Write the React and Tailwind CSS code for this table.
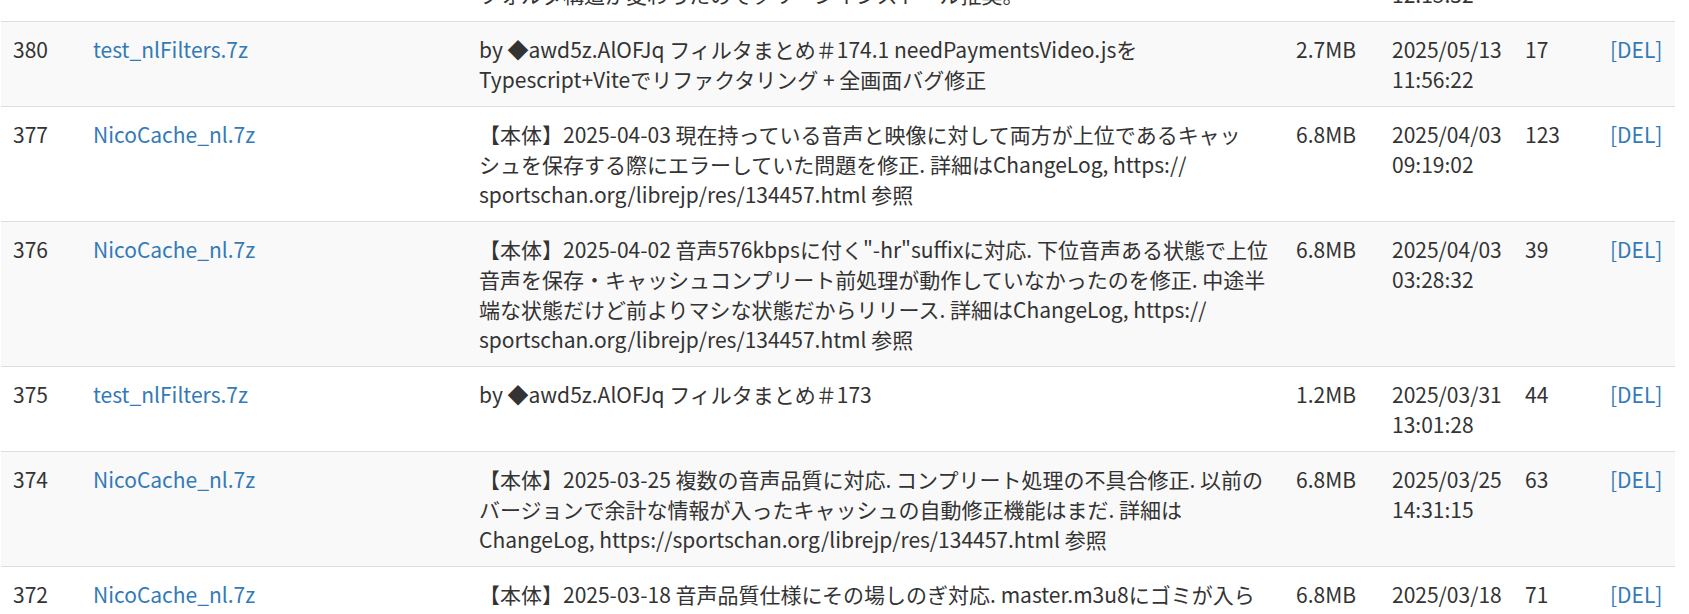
const url = <>https://<wbr />sportschan.org/librejp/res/134457.html</>

const rows = [
  {
    no: '379',
    file: 'NicoCache_nl.7z',
    desc: (<>【本体】2025-05-20 ダウンロード処理を整理.<br />フォルダ構造が変わったのでクリーンインストール推奨。</>),
    size: '6.8MB',
    date: '2025/05/20',
    time: '12:15:32',
    count: '88',
  },
  {
    no: '380',
    file: 'test_nlFilters.7z',
    desc: 'by ◆awd5z.AlOFJq フィルタまとめ＃174.1 needPaymentsVideo.jsを Typescript+Viteでリファクタリング + 全画面バグ修正',
    size: '2.7MB',
    date: '2025/05/13',
    time: '11:56:22',
    count: '17',
  },
  {
    no: '377',
    file: 'NicoCache_nl.7z',
    desc: (<>【本体】2025-04-03 現在持っている音声と映像に対して両方が上位であるキャッシュを保存する際にエラーしていた問題を修正. 詳細はChangeLog, {url} 参照</>),
    size: '6.8MB',
    date: '2025/04/03',
    time: '09:19:02',
    count: '123',
  },
  {
    no: '376',
    file: 'NicoCache_nl.7z',
    desc: (<>【本体】2025-04-02 音声576kbpsに付く"-hr"suffixに対応. 下位音声ある状態で上位音声を保存・キャッシュコンプリート前処理が動作していなかったのを修正. 中途半端な状態だけど前よりマシな状態だからリリース. 詳細はChangeLog, {url} 参照</>),
    size: '6.8MB',
    date: '2025/04/03',
    time: '03:28:32',
    count: '39',
  },
  {
    no: '375',
    file: 'test_nlFilters.7z',
    desc: 'by ◆awd5z.AlOFJq フィルタまとめ＃173',
    size: '1.2MB',
    date: '2025/03/31',
    time: '13:01:28',
    count: '44',
  },
  {
    no: '374',
    file: 'NicoCache_nl.7z',
    desc: (<>【本体】2025-03-25 複数の音声品質に対応. コンプリート処理の不具合修正. 以前のバージョンで余計な情報が入ったキャッシュの自動修正機能はまだ. 詳細はChangeLog, {url} 参照</>),
    size: '6.8MB',
    date: '2025/03/25',
    time: '14:31:15',
    count: '63',
  },
  {
    no: '372',
    file: 'NicoCache_nl.7z',
    desc: (<>【本体】2025-03-18 音声品質仕様にその場しのぎ対応. master.m3u8にゴミが入らないように修正. 詳細はChangeLog, {url} 参照</>),
    size: '6.8MB',
    date: '2025/03/18',
    time: '22:40:11',
    count: '71',
  },
]

const td = 'border-t border-[#ddd] p-3 align-top'

const App = () => {
  return <div lang="ja" className="h-[614px] w-[1689px] overflow-hidden bg-white">
    <table
      className="-mt-[64px] ml-px w-[1674px] table-fixed text-[21px] leading-[30px] text-[#333] [line-break:strict]"
      style={{ fontFamily: '"Noto Sans CJK JP", "Noto Sans", sans-serif' }}
    >
      <colgroup>
        <col className="w-[80px]" />
        <col className="w-[386px]" />
        <col className="w-[817px]" />
        <col className="w-[96px]" />
        <col className="w-[133px]" />
        <col className="w-[85px]" />
        <col className="w-[77px]" />
      </colgroup>
      <tbody>
        {rows.map((r, i) => (
          <tr key={r.no} className={i % 2 == 1 ? 'bg-[#f9f9f9]' : 'bg-white'}>
            <td className={td}>{r.no}</td>
            <td className={td}>
              <a href="#" className="text-[#337ab7]">{r.file}</a>
            </td>
            <td className={td}>{r.desc}</td>
            <td className={td}>{r.size}</td>
            <td className={td}>{r.date}<br />{r.time}</td>
            <td className={td}>{r.count}</td>
            <td className={td}>
              <a href="#" className="text-[#337ab7]">[DEL]</a>
            </td>
          </tr>
        ))}
      </tbody>
    </table>
  </div>
}

export default App
